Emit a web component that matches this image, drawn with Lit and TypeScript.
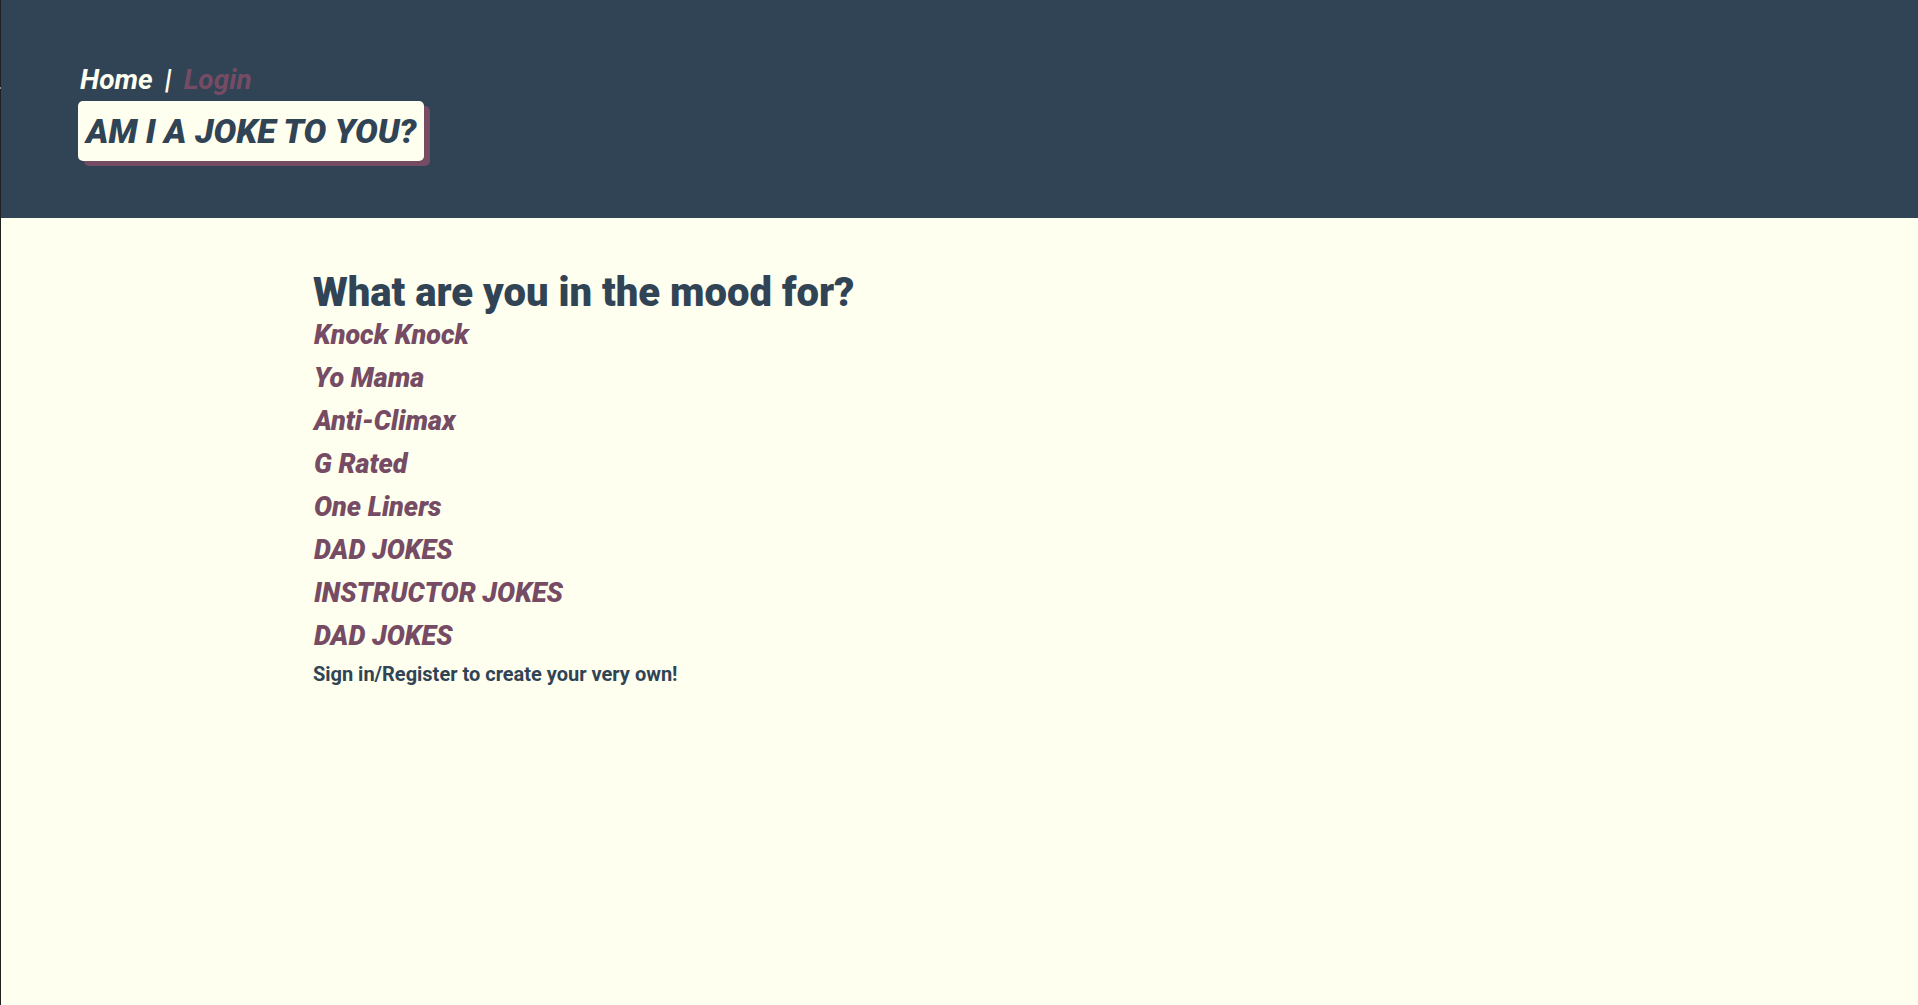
import { LitElement, html, css } from "lit";
import { customElement, state } from "lit/decorators.js";

@customElement("app-root")
export class AppRoot extends LitElement {
  static styles = css`
    :host {
      --navy: #314455;
      --plum: #764b64;
      --cream: #fffff0;
      display: block;
      position: relative;
      box-sizing: border-box;
      min-height: 100vh;
      border-left: 1px solid #202020;
      background: var(--cream);
      color: var(--navy);
      font-family: Roboto, "Liberation Sans", sans-serif;
    }
    .edge-mark {
      position: absolute;
      left: -1px;
      top: 87px;
      width: 1px;
      height: 2px;
      background: #8c8c8c;
    }
    .header {
      display: flex;
      flex-direction: column;
      align-items: flex-start;
      padding: 59px 77px 57px;
      background: var(--navy);
      color: var(--cream);
    }
    .nav {
      display: flex;
      gap: 12px;
      padding-left: 2px;
      font-size: 28px;
      line-height: 42px;
      font-weight: 700;
      font-style: italic;
    }
    .divider {
      font-weight: 900;
    }
    a {
      color: var(--plum);
      text-decoration: none;
    }
    .nav .current {
      color: var(--cream);
    }
    .title {
      margin: 0;
      padding: 0 8px;
      border-radius: 5px;
      background: var(--cream);
      box-shadow: 6px 5px 0 var(--plum);
      color: var(--navy);
      font-size: 34px;
      line-height: 60px;
      font-weight: 900;
      font-style: italic;
    }
    .main {
      padding: 54px 16vw;
      padding-left: calc(16vw + 5px);
    }
    .question {
      margin: 0;
      font-size: 40px;
      line-height: 42px;
      font-weight: 900;
    }
    .moods {
      margin: 0;
      padding: 0 0 0 1px;
      list-style: none;
      font-size: 27px;
      line-height: 43px;
      font-weight: 900;
      font-style: italic;
    }
    .note {
      margin: 0;
      font-size: 20px;
      line-height: 32px;
      font-weight: 700;
    }
  `;

  @state() private moods = [
    "Knock Knock",
    "Yo Mama",
    "Anti-Climax",
    "G Rated",
    "One Liners",
    "DAD JOKES",
    "INSTRUCTOR JOKES",
    "DAD JOKES",
  ];

  render() {
    return html`
      <span class="edge-mark"></span>
      <header class="header">
        <nav class="nav">
          <a class="current" href="#home">Home</a>
          <span class="divider">|</span>
          <a href="#login">Login</a>
        </nav>
        <h1 class="title">AM I A JOKE TO YOU?</h1>
      </header>
      <main class="main">
        <h2 class="question">What are you in the mood for?</h2>
        <ul class="moods">
          ${this.moods.map((mood) => html`<li><a href="#jokes">${mood}</a></li>`)}
        </ul>
        <p class="note">Sign in/Register to create your very own!</p>
      </main>
    `;
  }
}
